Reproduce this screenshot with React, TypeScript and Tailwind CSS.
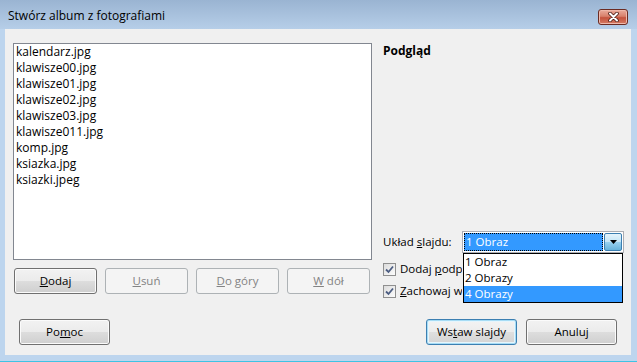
import type { ReactNode } from "react";

const files = [
  "kalendarz.jpg",
  "klawisze00.jpg",
  "klawisze01.jpg",
  "klawisze02.jpg",
  "klawisze03.jpg",
  "klawisze011.jpg",
  "komp.jpg",
  "ksiazka.jpg",
  "ksiazki.jpeg",
];

type BtnProps = {
  children: ReactNode
  width: string
  disabled?: boolean
  primary?: boolean
}

function Btn({ children, width, disabled, primary }: BtnProps) {
  let look =
    "border-[#707070] text-black bg-[linear-gradient(to_bottom,#f2f2f2_0%,#ebebeb_50%,#dddddd_51%,#cfcfcf_100%)] shadow-[inset_0_0_0_1px_#fbfbfb]";
  if (disabled) look = "border-[#adb2b5] text-[#838383] bg-[#f4f4f4]";
  if (primary)
    look =
      "border-[#3c7fb1] text-black bg-[linear-gradient(to_bottom,#f3f3f3_0%,#ececec_50%,#dfdfdf_51%,#d3d3d3_100%)] shadow-[inset_0_0_0_1px_#a6dcf5,inset_0_0_0_2px_#e6f5fc]";
  return (
    <div className={`${width} h-[26px] rounded-[3px] border flex items-center justify-center ${look}`}>
      {children}
    </div>
  );
}

// the open dropdown covers the rest of the label, so it is clipped at its edge
function Check({ children }: { children: ReactNode }) {
  return (
    <div className="flex items-center h-[16px] whitespace-nowrap">
      <div className="w-[13px] h-[13px] shrink-0 border border-[#8f8f8f] bg-[linear-gradient(135deg,#dcdcdc,#fcfcfc)] flex items-center justify-center">
        <svg width="11" height="11" viewBox="0 0 11 11">
          <path d="M2 5.5 L4.5 8 L9 2.5" fill="none" stroke="#4c5d82" strokeWidth="1.8" />
        </svg>
      </div>
      <span className="ml-[4px] w-[62px] overflow-hidden leading-[16px]">{children}</span>
    </div>
  );
}

export default function App() {
  return (
    <div className="w-[637px] h-[362px] flex flex-col bg-[#bdd5ee] font-['Open_Sans',sans-serif] text-[11.5px] text-black overflow-hidden">
      <div className="h-[29px] shrink-0 flex justify-between items-start pl-[8px] pr-[9px] bg-[linear-gradient(to_bottom,#9ab4d2,#b6cee8)]">
        <span className="mt-[8px] leading-[16px] text-[12px]">Stwórz album z fotografiami</span>
        <div className="mt-[9px] w-[30px] h-[16px] rounded-[3px] border border-[#6b2b22] bg-[linear-gradient(to_bottom,#eaab9c_0%,#d8806b_45%,#c4523d_55%,#d57b63_100%)] shadow-[inset_0_0_0_1px_#efb8aa] flex items-center justify-center">
          <svg width="13" height="10" viewBox="0 0 13 10">
            <path d="M3 1.5 L10 8.5 M10 1.5 L3 8.5" stroke="#4a1c15" strokeWidth="3.6" strokeLinecap="round" />
            <path d="M3 1.5 L10 8.5 M10 1.5 L3 8.5" stroke="#ffffff" strokeWidth="2" strokeLinecap="round" />
          </svg>
        </div>
      </div>

      <div className="ml-[5px] mr-[6px] h-[326px] bg-[#f0f0f0] flex flex-col">
        <div className="flex pt-[14px] pl-[8px]">
          <div className="w-[359px] flex flex-col">
            <div className="h-[217px] border border-[#828790] bg-white pl-[2px]">
              {files.map((f) => (
                <div key={f} className="leading-[16px] text-[12px]">{f}</div>
              ))}
            </div>
            <div className="mt-[8px] pl-[1px] flex gap-[8px]">
              <Btn width="w-[83px]"><span><u>D</u>odaj</span></Btn>
              <Btn width="w-[83px]" disabled><span><u>U</u>suń</span></Btn>
              <Btn width="w-[83px]" disabled><span><u>D</u>o góry</span></Btn>
              <Btn width="w-[83px]" disabled><span><u>W</u> dół</span></Btn>
            </div>
          </div>

          <div className="relative ml-[11px] flex-1 flex flex-col">
            <div className="font-bold leading-[16px] text-[12px]">Podgląd</div>
            <div className="mt-[172px] h-[22px] flex items-center">
              <span className="w-[79px] leading-[16px]">Układ <u>s</u>lajdu:</span>
              <div className="w-[162px] h-[22px] border border-[#abadb3] bg-white p-[1px] flex">
                <div className="flex-1 bg-[#3399ff] outline-1 outline-dotted outline-black -outline-offset-1 text-white leading-[18px] pl-[2px] mr-[1px]">1 Obraz</div>
                <div className="w-[18px] rounded-[2px] border border-[#3c7fb1] bg-[linear-gradient(to_bottom,#e5f4fc_0%,#c4e5f6_50%,#98d1ef_51%,#68b3db_100%)] flex items-center justify-center">
                  <svg width="7" height="4" viewBox="0 0 7 4">
                    <path d="M0 0 H7 L3.5 4 Z" fill="#000" />
                  </svg>
                </div>
              </div>
            </div>
            <div className="mt-[8px]">
              <Check>Dodaj <u>p</u>odpis do każdego slajdu</Check>
            </div>
            <div className="mt-[6px]">
              <Check><u>Z</u>achowaj współczynnik proporcji</Check>
            </div>

            <div className="absolute left-[80px] top-[210px] w-[160px] border border-black bg-white">
              <div className="leading-[16px] pl-[1px]">1 Obraz</div>
              <div className="leading-[16px] pl-[1px]">2 Obrazy</div>
              <div className="leading-[16px] pl-[1px] bg-[#3399ff] text-white">4 Obrazy</div>
            </div>
          </div>
        </div>

        <div className="mt-[20px] flex pl-[14px] pr-[14px]">
          <Btn width="w-[91px]"><span>Po<u>m</u>oc</span></Btn>
          <div className="ml-auto flex gap-[9px]">
            <Btn width="w-[91px]" primary><span>Ws<u>t</u>aw slajdy</span></Btn>
            <Btn width="w-[91px]"><span>Anuluj</span></Btn>
          </div>
        </div>
      </div>
      <div className="h-[6px] shrink-0" />
      <div className="h-[1px] shrink-0 bg-[#3ec3e4]" />
    </div>
  );
}
